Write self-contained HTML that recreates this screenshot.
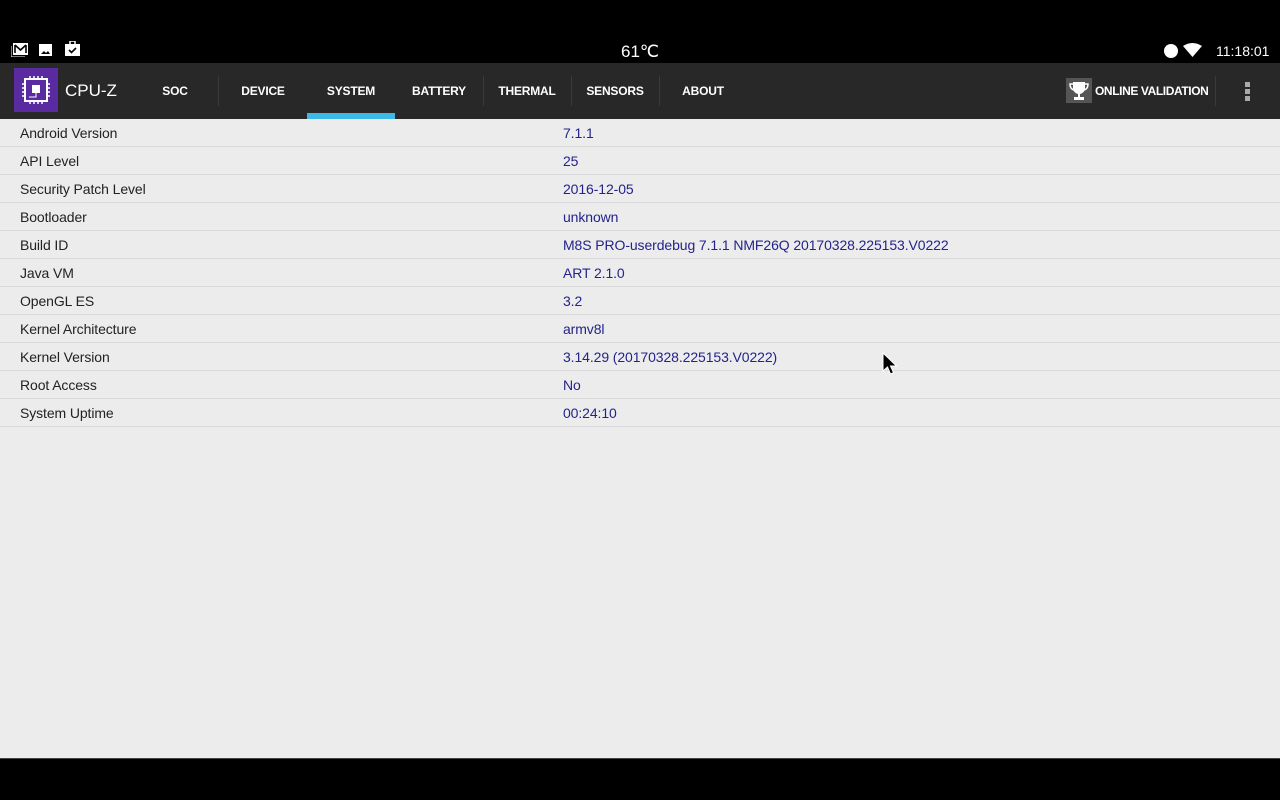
<!DOCTYPE html>
<html><head><style>
*{margin:0;padding:0;box-sizing:border-box}
body{width:1280px;height:800px;background:#000;font-family:"Liberation Sans",Arial,sans-serif;position:relative;overflow:hidden}
.sb{position:absolute;top:36px;left:0;width:1280px;height:27px;background:#000;color:#fff}
.tb{position:absolute;top:63px;left:0;width:1280px;height:56px;background:#282828}
.tab{position:absolute;top:0;height:56px;width:88px;color:#fff;font-weight:bold;font-size:12px;letter-spacing:-0.2px;text-align:center;line-height:56px}
.sep{position:absolute;top:13px;width:1px;height:30px;background:#3a3a3a}
.content{position:absolute;top:119px;left:0;width:1280px;height:639px;background:#ececec}
.row{height:28px;border-bottom:1px solid #d9d9d9;position:relative;font-size:14px;line-height:28px;letter-spacing:-0.1px}
.row .l{position:absolute;left:20px;color:#222}
.row .v{position:absolute;left:563px;color:#23238a}
</style></head><body>
<div class="sb">
 <svg style="position:absolute;left:11px;top:7px" width="18" height="14"><rect x="2" y="0" width="15" height="12" fill="#fff"/><path d="M4 2v8M15 2v8M4 2l5.5 5 5.5-5" stroke="#000" stroke-width="1.6" fill="none"/><path d="M0 3v11h14" stroke="#fff" fill="none"/></svg>
 <svg style="position:absolute;left:39px;top:8px" width="13" height="12"><rect width="13" height="12" fill="#fff"/><path d="M2 10l3-3 2 2 2-2 2 3z" fill="#000"/></svg>
 <svg style="position:absolute;left:65px;top:5px" width="15" height="15"><rect x="0" y="3" width="15" height="12" fill="#fff"/><rect x="5" y="0" width="5" height="4" fill="none" stroke="#fff" stroke-width="1.5"/><path d="M4 9l2.5 2.5L11 7" stroke="#000" stroke-width="1.6" fill="none"/></svg>
 <div style="position:absolute;left:0;width:1280px;text-align:center;top:6px;font-size:17px">61℃</div>
 <div style="position:absolute;left:1164px;top:8px;width:14px;height:14px;border-radius:50%;background:#fff"></div>
 <svg style="position:absolute;left:1183px;top:7px" width="19" height="14"><path d="M0 3Q9.5-3 19 3L9.5 14z" fill="#fff"/></svg>
 <div style="position:absolute;left:1216px;top:7px;font-size:14px">11:18:01</div>
</div>
<div class="tb">
 <div style="position:absolute;left:14px;top:5px;width:44px;height:44px;background:#5a2aa0">
  <svg width="44" height="44"><rect x="11" y="11" width="22" height="22" fill="none" stroke="#fff" stroke-width="2"/><rect x="18" y="17" width="8" height="8" fill="#fff"/><path d="M22 25v4h-7" stroke="#fff" fill="none"/><path d="M16 8v3M20 8v3M24 8v3M28 8v3M16 33v3M20 33v3M24 33v3M28 33v3M8 16h3M8 20h3M8 24h3M8 28h3M33 16h3M33 20h3M33 24h3M33 28h3" stroke="#fff" stroke-width="1.5"/></svg>
 </div>
 <div style="position:absolute;left:65px;top:18px;color:#fff;font-size:17px">CPU-Z</div>
 <div class="tab" style="left:131px">SOC</div>
 <div class="sep" style="left:218px"></div>
 <div class="tab" style="left:219px">DEVICE</div>
 <div class="tab" style="left:307px">SYSTEM</div>
 <div style="position:absolute;left:307px;top:50px;width:88px;height:6px;background:#3cb9e8"></div>
 <div class="tab" style="left:395px">BATTERY</div>
 <div class="sep" style="left:483px"></div>
 <div class="tab" style="left:483px">THERMAL</div>
 <div class="sep" style="left:571px"></div>
 <div class="tab" style="left:571px">SENSORS</div>
 <div class="sep" style="left:659px"></div>
 <div class="tab" style="left:659px">ABOUT</div>
 <div style="position:absolute;left:1066px;top:15px;width:26px;height:25px;background:#555">
  <svg width="26" height="25"><path d="M7 4h12v6a6 6 0 0 1-12 0z" fill="#fff"/><path d="M7 6H4q0 5 4 6M19 6h3q0 5-4 6" stroke="#fff" stroke-width="1.5" fill="none"/><rect x="12" y="15" width="2" height="4" fill="#fff"/><rect x="8" y="19" width="10" height="3" fill="#fff"/></svg>
 </div>
 <div style="position:absolute;left:1095px;top:0;line-height:56px;color:#fff;font-weight:bold;font-size:12px;letter-spacing:-0.4px">ONLINE VALIDATION</div>
 <div class="sep" style="left:1215px"></div>
 <div style="position:absolute;left:1245px;top:19px;width:5px;height:5px;background:#aaa;box-shadow:0 7px 0 #aaa,0 14px 0 #aaa"></div>
</div>
<div class="content">
 <div class="row"><span class="l">Android Version</span><span class="v">7.1.1</span></div>
 <div class="row"><span class="l">API Level</span><span class="v">25</span></div>
 <div class="row"><span class="l">Security Patch Level</span><span class="v">2016-12-05</span></div>
 <div class="row"><span class="l">Bootloader</span><span class="v">unknown</span></div>
 <div class="row"><span class="l">Build ID</span><span class="v">M8S PRO-userdebug 7.1.1 NMF26Q 20170328.225153.V0222</span></div>
 <div class="row"><span class="l">Java VM</span><span class="v">ART 2.1.0</span></div>
 <div class="row"><span class="l">OpenGL ES</span><span class="v">3.2</span></div>
 <div class="row"><span class="l">Kernel Architecture</span><span class="v">armv8l</span></div>
 <div class="row"><span class="l">Kernel Version</span><span class="v">3.14.29 (20170328.225153.V0222)</span></div>
 <div class="row"><span class="l">Root Access</span><span class="v">No</span></div>
 <div class="row"><span class="l">System Uptime</span><span class="v">00:24:10</span></div>
</div>
<div style="position:absolute;top:758px;left:0;width:1280px;height:1px;background:#444"></div>
<svg style="position:absolute;left:882px;top:352px" width="16" height="24"><path d="M1 1v18l4.5-4 3 7 3-1.3-3-6.7h6z" fill="#000" stroke="#fff" stroke-width="1"/></svg>
</body></html>
